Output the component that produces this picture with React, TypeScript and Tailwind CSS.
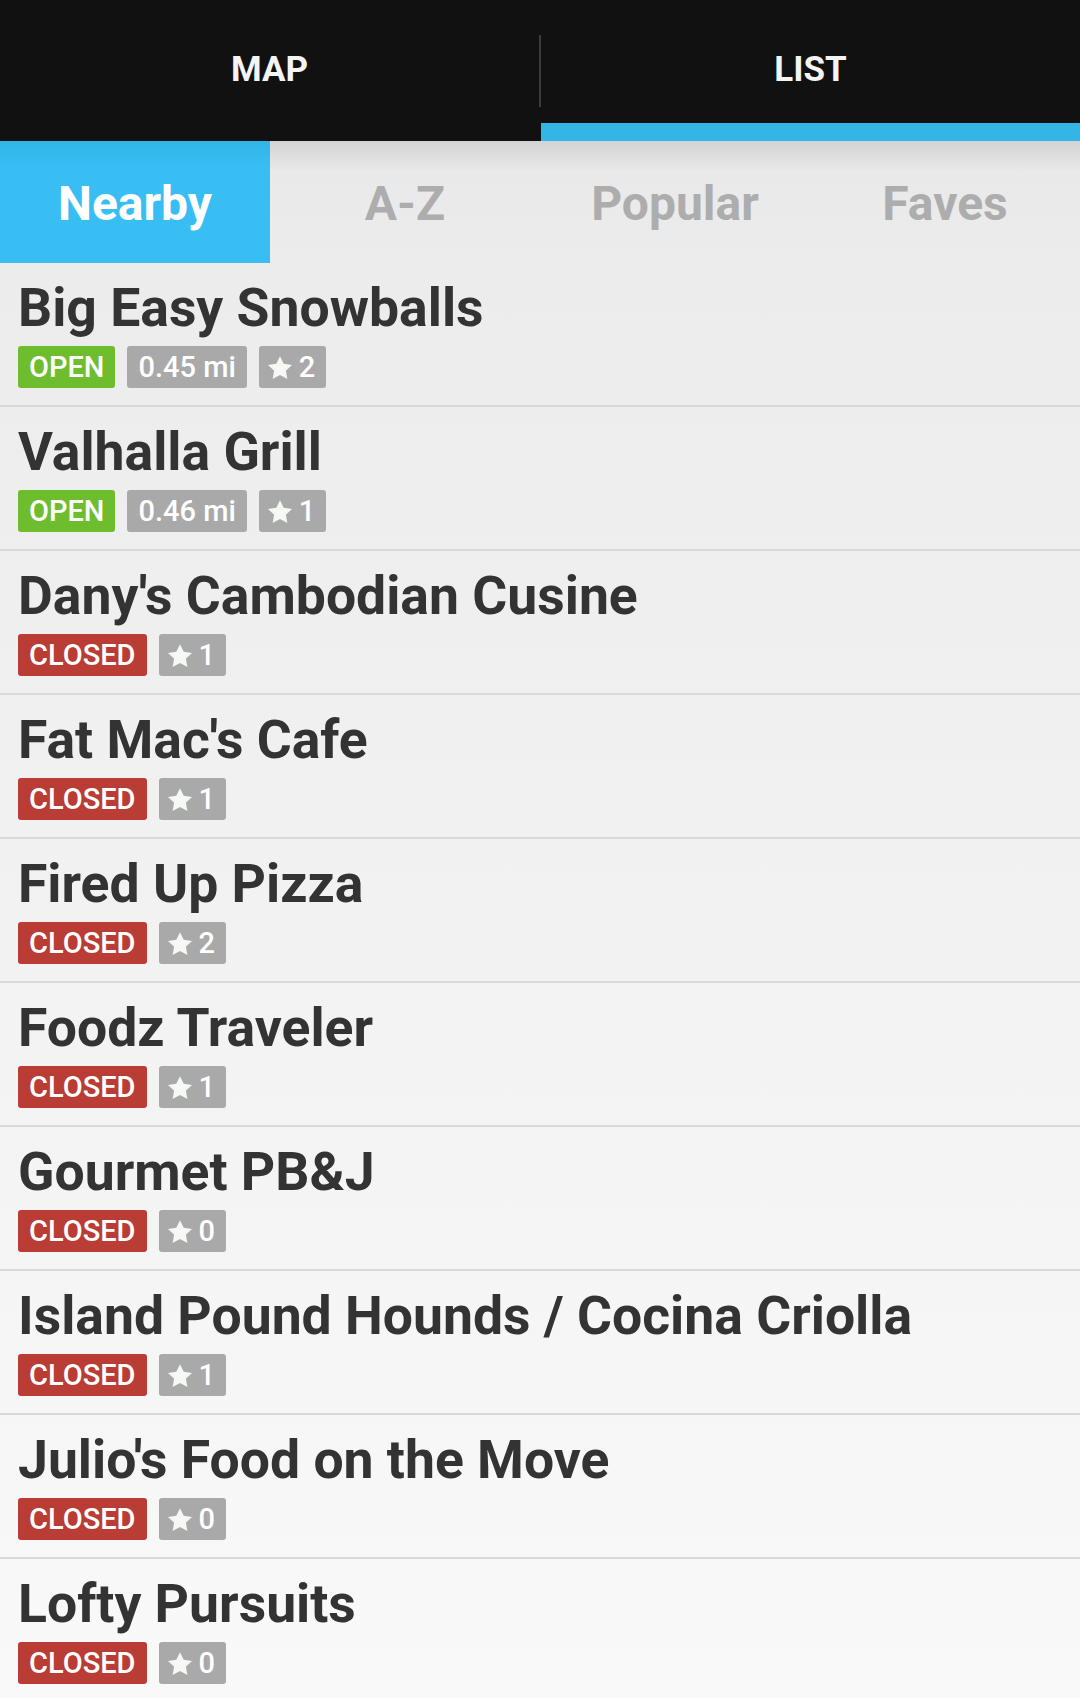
import React from 'react';

type Place = {
  name: string;
  open: boolean;
  distance?: string;
  stars: number;
};

const places: Place[] = [
  { name: 'Big Easy Snowballs', open: true, distance: '0.45 mi', stars: 2 },
  { name: 'Valhalla Grill', open: true, distance: '0.46 mi', stars: 1 },
  { name: "Dany's Cambodian Cusine", open: false, stars: 1 },
  { name: "Fat Mac's Cafe", open: false, stars: 1 },
  { name: 'Fired Up Pizza', open: false, stars: 2 },
  { name: 'Foodz Traveler', open: false, stars: 1 },
  { name: 'Gourmet PB&J', open: false, stars: 0 },
  { name: 'Island Pound Hounds / Cocina Criolla', open: false, stars: 1 },
  { name: "Julio's Food on the Move", open: false, stars: 0 },
  { name: 'Lofty Pursuits', open: false, stars: 0 },
];

const sortTabs = ['Nearby', 'A-Z', 'Popular', 'Faves'];

function Star() {
  return (
    <svg width="24" height="23" viewBox="0 0 24 23" className="fill-[#f5f8f3]">
      <path d="M12 0.2l3.7 7.6 8.3 1.1-6.1 5.8 1.5 8.3-7.4-4-7.4 4 1.5-8.3L0 8.9l8.3-1.1z" />
    </svg>
  );
}

function Badge({ className, children }: { className: string; children: React.ReactNode }) {
  return (
    <span
      className={`flex h-[42px] items-center gap-[7px] rounded-[3px] px-[11px] text-[29px] font-medium leading-none text-white ${className}`}
    >
      {children}
    </span>
  );
}

function PlaceRow({ place }: { place: Place }) {
  return (
    <div className="border-b-2 border-[#d9d9d9] pb-[17px] pl-[18px] pt-[15px]">
      <div className="whitespace-nowrap text-[53.5px] font-bold leading-[60px] text-[#333333]">
        {place.name}
      </div>
      <div className="mt-[8px] flex gap-[12px]">
        {place.open ? (
          <Badge className="bg-[#6dbd2f]">OPEN</Badge>
        ) : (
          <Badge className="bg-[#b93c35]">CLOSED</Badge>
        )}
        {place.distance && <Badge className="bg-[#a9a9a9]">{place.distance}</Badge>}
        <Badge className="bg-[#a9a9a9] pl-[9px]">
          <Star />
          {place.stars}
        </Badge>
      </div>
    </div>
  );
}

export default function App() {
  return (
    <div className="h-[1698px] w-[1080px] overflow-hidden bg-[#f4f4f4] font-['Roboto','Liberation_Sans',sans-serif]">
      {/* view switcher */}
      <div className="flex h-[141px] bg-[#111111]">
        <div className="flex flex-1 items-center justify-center text-[35px] font-bold text-[#f4f4f4]">
          MAP
        </div>
        <div className="h-[72px] w-[2px] self-center bg-[#3b3b3b]" />
        <div className="relative flex flex-1 items-center justify-center text-[35px] font-bold text-[#f4f4f4]">
          LIST
          <div className="absolute bottom-0 left-0 h-[18px] w-full bg-[#33b5e5]" />
        </div>
      </div>

      {/* sort tabs */}
      <div className="grid h-[122px] grid-cols-4 bg-[linear-gradient(to_bottom,#d3d3d3,#e9e9e9_25%,#ececec)]">
        {sortTabs.map((tab, i) => (
          <div
            key={tab}
            className={
              i === 0
                ? 'flex items-center justify-center bg-[linear-gradient(to_bottom,#32b4e6,#38bef3_20%)] pt-[4px] text-[48px] font-bold text-white'
                : 'flex items-center justify-center pt-[4px] text-[48px] font-bold text-[#adadad]'
            }
          >
            {tab}
          </div>
        ))}
      </div>

      {/* places */}
      <div className="bg-[linear-gradient(to_bottom,#ececec,#f9f9f9)]">
        {places.map((p) => (
          <PlaceRow key={p.name} place={p} />
        ))}
      </div>
    </div>
  );
}
